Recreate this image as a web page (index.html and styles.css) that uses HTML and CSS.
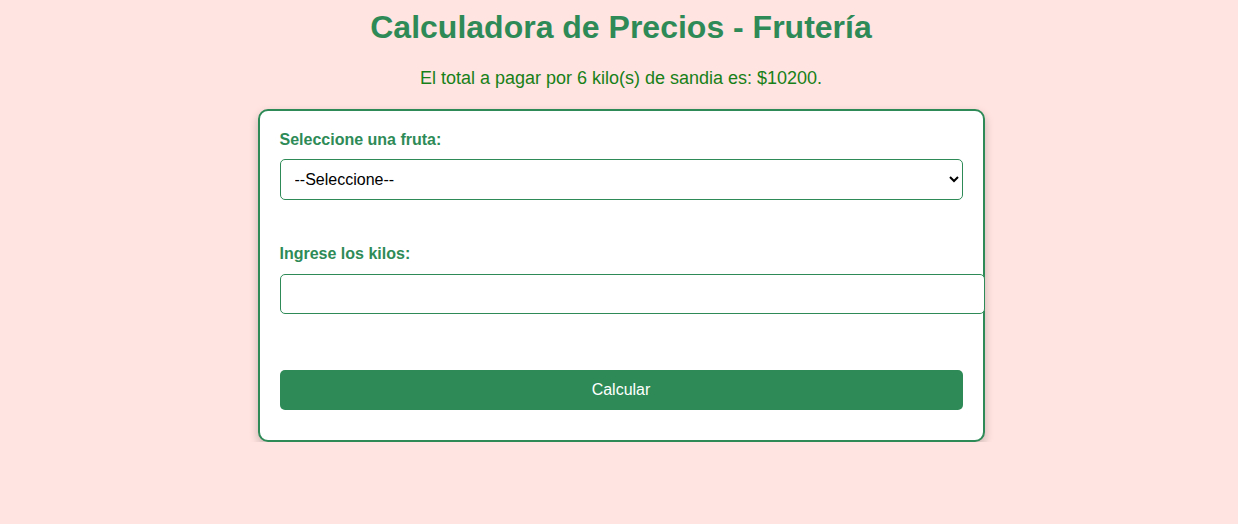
FILE: index.html
```html
<!DOCTYPE html>
<html lang="es">
<head>
<meta charset="utf-8">
<title>Calculadora de Precios - Frutería</title>
<link rel="stylesheet" href="styles.css">
</head>
<body>
<h1 class="title">Calculadora de Precios - Frutería</h1>
<p class="result">El total a pagar por 6 kilo(s) de sandia es: $10200.</p>
<form class="card">
  <label class="label" for="fruta">Seleccione una fruta:</label>
  <select class="select" id="fruta">
    <option>--Seleccione--</option>
    <option>Sandia</option>
    <option>Manzana</option>
  </select>
  <label class="label label-kilos" for="kilos">Ingrese los kilos:</label>
  <input class="input" id="kilos" type="number">
  <button class="button" type="button">Calcular</button>
</form>
</body>
</html>
```

FILE: styles.css
```css
html, body {
  margin: 0;
  background: #ffe4e1;
}
body {
  padding: 0 0 0 4px;
  font-family: "Liberation Sans", Arial, sans-serif;
}
.title {
  margin: 9px 0 0;
  text-align: center;
  color: #2e8b57;
  font-size: 32px;
  line-height: 37px;
  font-weight: bold;
}
.result {
  margin: 22px 0 20px;
  text-align: center;
  color: #188018;
  font-size: 18px;
  line-height: 21px;
}
.card {
  width: 683px;
  margin: 0 auto;
  padding: 20px 20px 30px;
  background: #fff;
  border: 2px solid #2e8b57;
  border-radius: 10px;
  box-shadow: 0 4px 10px rgba(0, 0, 0, 0.22);
  display: flex;
  flex-direction: column;
  align-items: flex-start;
}
.label {
  display: block;
  color: #2e8b57;
  font-weight: bold;
  font-size: 16px;
  line-height: 18px;
  margin-bottom: 10px;
}
.label-kilos {
  margin-top: 45px;
  margin-bottom: 11px;
}
.select {
  box-sizing: border-box;
  width: 683px;
  height: 41px;
  padding: 0 10px;
  font-family: "Liberation Sans", Arial, sans-serif;
  font-size: 16px;
  color: #000;
  background: #fff;
  border: 1px solid #2e8b57;
  border-radius: 5px;
}
.input {
  box-sizing: content-box;
  width: 683px;
  height: 18px;
  padding: 10px;
  font-family: "Liberation Sans", Arial, sans-serif;
  font-size: 16px;
  background: #fff;
  border: 1px solid #2e8b57;
  border-radius: 5px;
  margin: 0;
}
.button {
  margin-top: 56px;
  width: 683px;
  height: 40px;
  border: none;
  border-radius: 5px;
  background: #2e8b57;
  color: #fff;
  font-family: "Liberation Sans", Arial, sans-serif;
  font-size: 16px;
}
```
